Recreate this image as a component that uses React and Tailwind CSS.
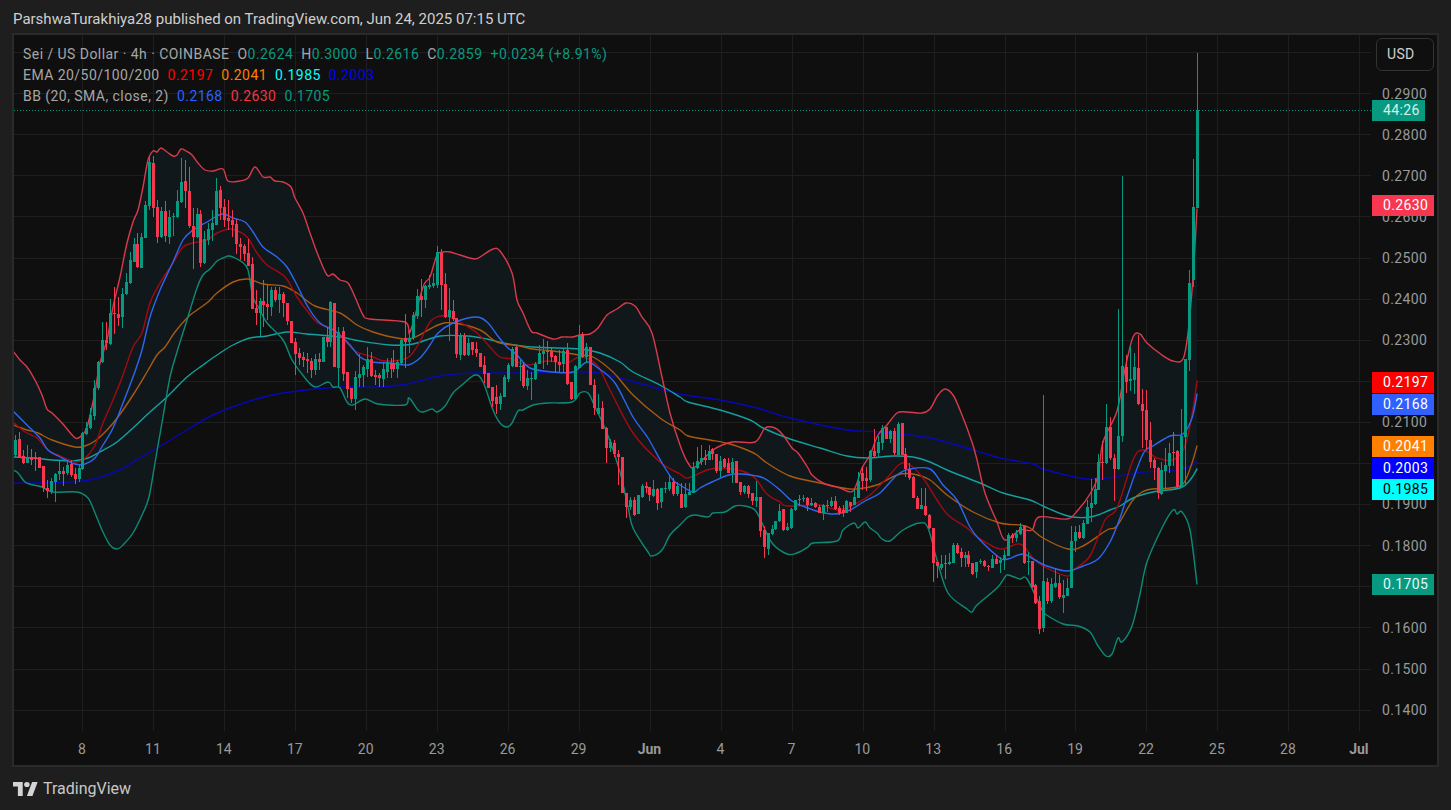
const seg = (ox, oy, sy, rows) => rows.map(([x, g, t, b, wt, wb]) => ({
  x: Math.round(ox + x / 3), g, t: oy + t / sy, b: oy + b / sy, wt: oy + wt / sy, wb: oy + wb / sy,
}));

const candles = [
  ...seg(0, 130, 3, [
    [46,1,930,975,915,980],[58,0,927,985,905,985],[70,0,978,1000,960,1003],[82,1,980,1000,945,1000],[94,0,980,990,958,1005],[106,0,982,987,965,1022],[118,0,982,1015,982,1015],[130,0,1007,1075,1007,1085],[142,0,1073,1083,1050,1103],[154,1,1053,1085,1045,1093],[166,1,1033,1055,1030,1115],[178,1,1023,1032,992,1050],[190,0,1023,1032,1010,1068],[202,1,1005,1030,995,1035],[214,0,1003,1035,990,1040],[226,0,1032,1047,1015,1062],[238,1,1015,1047,1005,1055],[247,1,910,1017,905,1020],[259,1,895,912,875,915],[271,1,855,895,835,898],[283,1,775,857,750,870],[295,1,697,775,693,780],[307,1,630,697,575,700],[319,0,630,640,575,660],[331,1,550,642,507,645],[343,0,548,553,472,612],[355,0,553,563,500,588],[367,1,492,560,475,593],[379,1,457,493,430,495],[391,1,390,458,365,462],[403,1,343,395,325,395],[412,0,342,412,310,415],[424,1,322,413,310,415],[436,1,225,323,212,325],[448,1,95,228,80,240],[460,0,100,235,78,260],[472,0,232,320,210,338],[484,1,243,320,230,325],[496,0,243,318,212,335],[508,1,262,320,240,343],[520,1,257,262,250,318],[532,1,213,262,180,265],[544,1,155,215,85,218],[556,0,153,182,90,235],[568,0,183,288,112,295],[580,0,288,320,235,418],[592,1,252,320,235,325],[601,0,252,398,240,410],[613,1,328,400,302,402],[625,1,297,330,280,345],[637,1,280,300,240,332],[649,1,183,285,145,285],[661,0,181,233,168,270],[673,0,231,270,208,290],[685,0,265,273,210,300],[697,0,270,285,240,320],[709,0,283,343,268,372],[721,0,343,351,325,390],[733,0,348,372,342,392],[745,0,370,407,328,407],[757,0,403,537,380,538],[769,0,535,548,480,585],[781,1,513,550,505,618],[790,0,513,525,450,590],[802,0,522,530,465,570],[814,1,480,530,470,558],[826,0,480,510,470,515],[838,1,492,510,470,548],[850,0,492,520,485,560],[862,0,520,573,518,585],[874,0,573,640,573,640],[886,0,636,671,625,735],[898,0,670,683,655,705],[910,0,682,690,665,710],[922,0,688,694,668,728],[934,0,692,720,685,745],[946,1,688,720,672,735],[958,0,688,695,670,720],[970,1,620,695,620,695],[981,0,620,635,590,650],[991,1,517,635,513,650],[1003,0,518,710,518,710],[1015,1,605,713,590,770],
  ]),
  ...seg(340, 230, 3, [
    [8,0,302,432,292,452],[20,0,427,477,425,505],[32,0,473,507,473,518],[44,1,441,507,422,540],[56,1,432,443,372,470],[68,1,412,435,405,470],[80,1,387,417,350,440],[92,0,387,437,365,440],[104,0,434,441,420,465],[116,0,434,444,430,470],[128,1,417,446,395,472],[140,1,397,427,385,445],[152,0,400,418,385,445],[160,0,400,417,360,425],[172,1,396,417,390,443],[184,1,330,400,325,405],[196,0,325,335,252,415],[208,1,323,335,300,370],[220,1,255,325,245,330],[232,1,197,258,178,268],[244,0,197,210,148,260],[256,1,168,210,165,233],[268,1,165,172,135,178],[280,1,158,168,130,175],[292,1,66,165,48,175],[304,0,68,165,58,240],[316,0,162,260,130,265],[328,1,240,262,175,332],[340,0,242,268,210,272],[349,0,265,372,265,385],[361,1,318,374,308,390],[373,0,318,375,308,378],[385,1,338,375,325,378],[397,0,336,360,335,375],[409,0,358,370,335,380],[421,0,368,410,368,412],[433,0,405,432,378,460],[445,0,430,473,428,475],[457,0,471,512,470,530],[469,0,500,522,465,552],[481,1,498,522,490,540],[493,1,440,500,435,500],[505,1,405,447,400,455],[517,1,357,407,350,410],[529,0,350,410,347,412],[541,1,407,410,390,452],[550,0,405,468,395,475],[562,1,445,468,420,480],[574,1,444,446,425,510],[586,1,403,446,395,450],[598,1,370,402,345,403],[610,1,363,372,327,418],[622,0,362,366,333,405],[634,0,362,382,350,395],[646,0,378,397,375,425],[658,0,395,405,360,425],[670,1,362,403,355,428],[682,0,360,462,340,465],[694,0,456,507,455,510],[706,1,407,507,405,510],[718,1,315,413,285,415],[727,0,312,380,307,383],[739,1,350,380,340,400],[751,0,352,465,352,465],[763,0,465,535,447,555],[775,1,535,552,493,555],[787,0,534,597,514,597],[799,0,595,653,590,698],[811,1,635,655,628,665],[823,0,640,672,630,682],[835,0,672,682,660,765],[847,0,682,790,682,790],[859,0,790,830,790,865],[871,1,810,830,800,840],[883,0,810,855,800,858],[895,1,795,852,795,852],[907,1,768,800,762,805],[919,0,768,773,755,790],[928,0,772,795,772,812],[940,1,778,797,750,800],[952,0,778,818,775,840],[964,1,775,817,775,835],[976,1,775,778,755,790],[988,1,755,777,735,782],[1000,0,755,792,745,798],[1012,1,768,792,755,798],
  ]),
  ...seg(680, 370, 3, [
    [4,0,373,415,340,415],[16,1,373,412,340,415],[28,1,365,375,340,375],[40,1,293,368,275,370],[52,1,273,295,232,298],[64,1,264,276,225,285],[76,0,264,270,240,285],[88,1,243,270,225,270],[97,0,238,253,235,270],[109,0,253,303,253,310],[121,1,272,302,258,320],[133,0,266,292,265,295],[145,0,278,308,265,310],[157,1,276,310,265,340],[169,0,274,338,274,340],[181,0,336,366,336,375],[193,1,348,366,345,372],[205,0,348,373,345,385],[217,0,368,392,368,405],[229,1,381,392,332,410],[241,0,380,483,380,500],[253,0,480,532,468,563],[265,1,490,537,488,555],[277,1,477,492,465,495],[286,1,453,478,453,480],[298,1,423,453,402,455],[310,0,417,480,417,482],[322,1,472,480,460,482],[334,1,418,474,415,478],[346,1,390,420,390,422],[358,0,387,390,375,408],[370,1,385,388,375,395],[382,0,384,405,382,422],[394,1,400,404,385,408],[406,0,400,412,395,415],[418,0,412,428,405,430],[430,1,405,428,402,450],[442,1,404,406,390,425],[454,1,393,408,380,412],[466,0,393,417,378,420],[478,0,414,428,408,435],[490,0,420,428,405,442],[499,1,393,428,390,430],[511,0,396,408,395,425],[523,1,381,405,360,405],[535,1,334,383,307,385],[547,0,309,333,288,360],[559,0,325,333,290,362],[571,1,243,331,240,335],[583,0,243,258,178,265],[595,1,216,250,198,265],[607,1,174,218,165,240],[619,0,172,207,170,208],[631,1,183,207,180,220],[643,0,183,250,175,255],[655,1,162,255,155,255],[667,0,160,255,160,255],[676,0,252,296,235,322],[688,0,296,323,280,330],[700,0,320,384,318,385],[712,0,384,417,378,418],[724,1,405,417,355,418],[736,0,408,436,355,438],[748,0,434,473,432,478],[760,0,473,578,473,635],[772,0,576,587,576,625],[784,1,582,595,555,600],[796,0,580,583,555,628],[808,1,575,583,550,585],[820,1,524,578,520,578],[832,0,524,548,518,552],[844,0,545,565,535,590],[856,1,555,563,545,590],[865,0,555,582,543,590],[877,0,578,612,578,615],[889,1,577,607,575,623],[901,1,573,576,567,582],[913,0,573,588,570,590],[925,0,588,592,585,603],[937,1,567,593,555,595],[949,0,567,581,555,583],[961,1,570,578,562,610],[973,1,555,570,540,600],[985,1,495,557,490,557],[997,0,495,505,490,520],[1009,1,492,505,480,515],
  ]),
  ...seg(1000, 40, 2.49, [
    [61,1,1212,1230,1203,1232],[73,0,1210,1302,1210,1305],[85,1,1298,1300,1275,1332],[97,0,1297,1362,1297,1365],[106,0,1358,1402,1355,1405],[118,0,1398,1467,1385,1480],[130,1,1346,1465,885,1475],[142,0,1349,1398,1340,1405],[154,1,1355,1398,1340,1403],[166,1,1352,1362,1315,1365],[178,0,1351,1386,1332,1392],[190,1,1382,1390,1345,1427],[202,1,1364,1384,1340,1385],[214,1,1247,1365,1210,1365],[226,1,1225,1248,1210,1275],[238,0,1225,1240,1208,1242],[250,1,1202,1240,1195,1242],[262,1,1162,1204,1145,1205],[274,1,1152,1165,1093,1200],[286,1,1118,1155,1090,1157],[295,1,1050,1120,1030,1120],[307,0,1050,1053,998,1095],[319,1,963,1053,907,1055],[331,0,963,1042,938,1045],[343,0,1040,1068,1030,1147],[355,1,986,1068,670,1070],[367,1,811,986,338,1002],[379,0,813,851,785,878],[391,1,845,848,760,875],[403,1,813,846,780,882],[415,0,816,907,735,908],[427,0,906,923,868,1015],[439,0,921,997,872,1022],[451,0,996,1050,950,1065],[463,0,1047,1066,1040,1095],[475,0,1065,1128,1062,1142],[484,1,1070,1130,1050,1132],[496,1,1058,1072,1015,1120],[508,1,1028,1060,1003,1078],[520,0,1026,1028,975,1060],[532,0,1023,1112,1020,1115],[544,1,986,1112,918,1115],[556,1,795,988,795,1110],[568,1,604,797,572,825],[580,1,416,598,296,616],[592,1,174,418,32,418],
  ]),
];

const upper = "13,351 20,360 27,367 35,380 42,395 47,409 52,413 62,423 74,437 78,438 82,435 87,427 94,397 100,363 107,340 113,307 120,277 127,243 133,222 138,210 143,187 148,160 153,151 157,152 161,148 167,152 173,156 177,155 181,149 186,151 192,155 198,163 205,170 213,171 223,169 228,181 240,181 248,178 255,167 263,177 270,177 275,181 283,182 291,187 295,198 303,213 310,233 318,255 327,275 333,274 340,280 348,283 355,297 363,315 370,319 405,322 410,332 423,287 430,277 437,255 443,252 450,252 460,255 475,259 483,255 493,249 500,251 512,273 517,300 523,313 531,331 537,333 553,339 562,337 572,337 580,335 590,334 598,328 607,315 617,309 626,303 635,306 642,317 652,333 662,377 670,413 680,445 688,463 695,467 713,450 732,442 755,442 765,428 775,428 783,435 792,448 798,453 808,468 812,475 823,483 840,488 853,491 862,468 870,455 878,435 887,425 897,413 907,412 922,413 930,409 938,395 945,389 953,395 960,410 972,442 977,460 985,493 997,522 1005,540 1020,530 1032,530 1039,517 1067,519 1078,510 1090,494 1098,476 1103,442 1117,411 1125,369 1133,337 1140,334 1147,343 1162,355 1173,361 1183,359 1188,333 1193,277 1197,209";
const lower = "13,470 18,473 25,482 33,485 42,487 53,492 77,492 88,498 95,513 102,530 110,545 117,549 123,545 133,533 143,513 149,497 155,463 163,417 170,377 177,352 187,320 197,288 203,275 210,269 217,261 223,258 228,256 233,257 242,262 248,270 253,297 260,310 267,323 283,340 292,360 305,378 315,387 328,382 333,387 340,388 347,402 353,405 365,399 378,404 405,405 409,398 418,410 423,412 432,409 437,412 445,406 453,393 462,385 475,375 483,382 493,410 500,423 507,427 512,423 518,411 523,410 533,405 547,403 572,402 580,393 588,393 595,407 607,433 620,472 628,507 633,528 648,552 652,556 662,550 670,535 680,525 688,517 695,515 708,517 713,513 725,512 735,506 745,506 755,510 762,523 772,543 787,554 797,553 808,547 813,543 837,541 843,530 854,523 858,528 865,522 870,528 877,533 882,539 890,541 903,530 920,523 928,528 937,560 948,593 967,609 972,612 977,605 997,588 1005,577 1008,575 1020,579 1027,579 1042,610 1045,614 1063,624 1078,626 1090,632 1098,646 1106,656 1112,654 1118,638 1122,642 1132,626 1140,594 1147,562 1162,528 1173,510 1177,514 1182,512 1190,530 1197,584";
const basis = "13,411 27,425 40,438 48,450 60,457 75,464 85,464 95,458 103,445 113,428 123,403 133,377 142,350 150,317 160,290 173,262 183,240 193,230 207,222 222,214 233,218 245,222 253,232 263,247 277,257 287,267 297,285 308,307 320,323 333,330 340,335 350,345 360,357 372,362 390,363 408,365 420,358 430,345 438,333 453,323 475,317 487,322 497,335 507,347 517,355 530,368 553,372 573,372 587,362 598,368 615,383 633,417 648,438 662,463 673,480 680,485 693,492 700,488 712,482 733,474 757,476 767,480 780,490 792,501 805,507 820,512 835,514 850,510 865,501 880,493 897,475 910,469 930,469 943,485 957,500 970,527 980,540 1000,558 1008,559 1023,554 1035,560 1047,566 1067,571 1083,566 1098,559 1110,542 1120,518 1128,494 1143,454 1153,446 1170,436 1183,434 1192,418 1197,394";
const ema20 = "13,422 25,432 37,438 48,450 58,455 75,462 85,458 95,445 103,423 113,400 123,375 133,347 142,333 150,303 160,283 173,263 183,247 193,243 207,240 217,233 230,229 240,232 248,238 257,253 267,265 285,277 297,297 308,312 318,323 333,329 340,335 347,343 357,352 373,357 385,361 407,358 418,345 430,322 440,316 450,317 460,322 477,333 490,347 500,357 512,359 527,365 547,361 567,363 580,357 597,365 610,390 633,433 660,462 680,474 688,478 707,470 720,468 742,471 755,478 767,494 780,502 787,506 820,505 837,510 853,505 870,495 887,478 900,464 910,465 923,478 937,500 948,515 967,528 977,537 1000,549 1020,544 1033,558 1043,566 1067,576 1073,570 1090,556 1105,520 1117,508 1133,460 1143,450 1157,458 1173,460 1185,446 1193,409 1197,381";
const ema50 = "13,425 27,430 38,433 52,440 75,447 85,446 95,441 107,430 118,417 133,395 147,372 157,355 165,347 175,332 188,317 197,310 208,302 217,293 233,282 248,279 263,284 283,286 297,293 315,306 340,313 357,325 373,332 397,338 413,338 438,325 453,323 480,330 497,342 520,346 533,349 553,351 580,355 593,357 613,372 633,395 660,418 680,430 688,436 710,440 730,444 747,450 757,455 767,463 790,476 820,483 843,488 857,489 877,485 897,475 913,474 930,480 947,495 973,512 1000,523 1020,525 1030,528 1043,538 1068,549 1083,546 1107,530 1117,526 1133,500 1147,490 1170,488 1183,484 1191,466 1197,446";
const ema100 = "13,457 33,458 53,460 73,461 88,458 100,452 117,442 133,428 150,412 167,397 187,377 203,365 217,355 233,345 250,338 267,336 287,332 307,334 340,337 360,341 390,345 413,344 440,336 467,336 487,339 503,343 533,347 580,349 600,353 620,362 633,372 660,385 680,397 688,402 720,410 750,420 763,428 790,439 820,448 847,456 867,458 893,456 913,457 930,462 947,470 980,483 1003,493 1030,500 1043,506 1068,516 1090,517 1110,510 1120,506 1133,498 1153,492 1180,488 1190,480 1197,469";
const ema200 = "13,483 27,483 67,482 90,480 117,471 140,458 167,442 187,430 213,415 247,402 283,393 340,387 377,387 407,384 440,376 473,373 523,373 590,372 627,380 680,394 720,400 757,408 790,418 847,430 880,432 930,438 973,450 1000,458 1033,464 1043,469 1080,478 1100,479 1120,476 1143,472 1180,470 1197,462";

// Catmull-Rom through the traced points, so the lines curve as the originals do.
const parse = (s) => s.split(" ").map((p) => p.split(",").map(Number));
const curve = (pts) => {
  let d = "";
  for (let i = 0; i < pts.length - 1; i++) {
    const a = pts[Math.max(i - 1, 0)], b = pts[i], c = pts[i + 1], e = pts[Math.min(i + 2, pts.length - 1)];
    d += `C${(b[0] + (c[0] - a[0]) / 6).toFixed(1)} ${(b[1] + (c[1] - a[1]) / 6).toFixed(1)} ${(c[0] - (e[0] - b[0]) / 6).toFixed(1)} ${(c[1] - (e[1] - b[1]) / 6).toFixed(1)} ${c[0]} ${c[1]}`;
  }
  return d;
};
const line = (s) => { const p = parse(s); return `M${p[0][0]} ${p[0][1]}` + curve(p); };
const band = () => {
  const u = parse(upper), l = parse(lower).reverse();
  return `M${u[0][0]} ${u[0][1]}` + curve(u) + `L${l[0][0]} ${l[0][1]}` + curve(l) + "Z";
};

const gridY = Array.from({ length: 17 }, (_, i) => 52 + i * 41.1);
const gridX = [82, 153, 224, 295, 366, 437, 508, 579, 650, 721, 792, 863, 934, 1005, 1075, 1146, 1217, 1288, 1359];
const dates = ["8", "11", "14", "17", "20", "23", "26", "29", "Jun", "4", "7", "10", "13", "16", "19", "22", "25", "28", "Jul"];
const ticks = ["0.2900", "0.2800", "0.2700", "0.2600", "0.2500", "0.2400", "0.2300", "", "0.2100", "", "0.1900", "0.1800", "", "0.1600", "0.1500", "0.1400"];
const pills = [
  { v: "44:26", top: 65, w: "w-[53px]", c: "bg-[#089981] text-[#d6f0ea]" },
  { v: "0.2630", top: 160, w: "w-[62px]", c: "bg-[#f7374f] text-white" },
  { v: "0.2197", top: 337, w: "w-[62px]", c: "bg-[#ff0000] text-white" },
  { v: "0.2168", top: 359, w: "w-[62px]", c: "bg-[#3060ff] text-white" },
  { v: "0.2041", top: 401, w: "w-[62px]", c: "bg-[#ff7f00] text-white" },
  { v: "0.2003", top: 423, w: "w-[62px]", c: "bg-[#0000ff] text-white" },
  { v: "0.1985", top: 444, w: "w-[62px]", c: "bg-[#00ffff] text-black" },
  { v: "0.1705", top: 539, w: "w-[62px]", c: "bg-[#089981] text-[#e6f7f3]" },
];

function Chart() {
  return (
    <svg viewBox="14 35 1357 696" className="block h-[696px] w-[1357px]">
      <g stroke="#1f1f1f" strokeWidth="1" shapeRendering="crispEdges">
        {gridY.map((y) => <line key={y} x1="14" x2="1371" y1={Math.round(y) + 0.5} y2={Math.round(y) + 0.5} />)}
        {gridX.map((x) => <line key={x} x1={x + 0.5} x2={x + 0.5} y1="35" y2="731" />)}
      </g>
      <path d={band()} fill="#11181c" />
      <g fill="none" strokeWidth="1.4" strokeLinejoin="round" strokeLinecap="round">
        <path d={line(ema200)} stroke="#0808b4" />
        <path d={line(ema100)} stroke="#12a0a0" />
        <path d={line(ema50)} stroke="#a85a10" />
        <path d={line(ema20)} stroke="#a20a10" />
        <path d={line(upper)} stroke="#d93a4c" />
        <path d={line(lower)} stroke="#0e8a75" />
        <path d={line(basis)} stroke="#2f66f0" />
      </g>
      <g shapeRendering="crispEdges">
        {candles.map((c, i) => (
          <g key={i} fill={c.g ? "#089981" : "#f7374f"}>
            <rect x={c.x} y={c.wt} width="1" height={Math.max(c.wb - c.wt, 1)} />
            <rect x={c.x - 1} y={c.t} width="3" height={Math.max(c.b - c.t, 1)} />
          </g>
        ))}
      </g>
      <line x1="14" x2="1371" y1="110.5" y2="110.5" stroke="#089981" strokeWidth="1" strokeDasharray="1 2" />
    </svg>
  );
}

function Logo() {
  return (
    <svg viewBox="0 3 36 22" className="h-[14px] w-[25px] fill-[#d4d4d4]" preserveAspectRatio="none">
      <path d="M14 25H7V10H0V3h14v22zM28 25h-8l7.5-22h8L28 25z" />
      <circle cx="20" cy="7" r="4" />
    </svg>
  );
}

export default function App() {
  return (
    <div className="flex h-[810px] w-[1451px] flex-col bg-[#1e1e1e] pl-3 font-['Roboto',sans-serif] text-[#c8c8c8]">
      <div className="flex h-[33px] items-center pt-[5px] text-[15px] text-[#cfcfcf]">
        <span className="ml-px">ParshwaTurakhiya28 published on TradingView.com, Jun 24, 2025 07:15 UTC</span>
      </div>
      <div className="flex w-[1427px] flex-col border-2 border-[#2a2a2a] bg-[#0f0f0f]">
        <div className="flex h-[696px]">
          <div className="relative h-[696px] w-[1357px] shrink-0">
            <Chart />
            <div className="absolute left-[9px] top-[9px] flex flex-col text-[14px] leading-[21px] tracking-[0.45px] text-[#a6a6a6]">
              <div className="flex">
                <span>Sei / US Dollar · 4h · COINBASE</span>
                <span className="ml-2">O<span className="text-[#089981]">0.2624</span></span>
                <span className="ml-2">H<span className="text-[#089981]">0.3000</span></span>
                <span className="ml-2">L<span className="text-[#089981]">0.2616</span></span>
                <span className="ml-2">C<span className="text-[#089981]">0.2859</span></span>
                <span className="ml-2 text-[#089981]">+0.0234 (+8.91%)</span>
              </div>
              <div className="flex">
                <span>EMA 20/50/100/200</span>
                <span className="ml-2 text-[#ff0000]">0.2197</span>
                <span className="ml-2 text-[#ff7f00]">0.2041</span>
                <span className="ml-2 text-[#00ffff]">0.1985</span>
                <span className="ml-2 text-[#0000ff]">0.2003</span>
              </div>
              <div className="flex">
                <span>BB (20, SMA, close, 2)</span>
                <span className="ml-2 text-[#2962ff]">0.2168</span>
                <span className="ml-2 text-[#f23645]">0.2630</span>
                <span className="ml-2 text-[#089981]">0.1705</span>
              </div>
            </div>
          </div>
          <div className="relative flex-1 pl-[11px] text-[14px] tracking-[0.35px] text-[#9a9a9a]">
            <div className="absolute left-[5px] top-[3px] flex h-[33px] w-[58px] items-center rounded-md border border-[#333333] pl-[10px] text-[#cfcfcf]">USD</div>
            <div className="flex flex-col pt-[38.5px]">
              {ticks.map((t, i) => (
                <div key={i} className="flex h-[41.1px] items-center">{t}</div>
              ))}
            </div>
            {pills.map((p) => (
              <div key={p.v} style={{ top: p.top }} className={`absolute left-px flex h-[21px] items-center pl-[11px] ${p.w} ${p.c}`}>{p.v}</div>
            ))}
          </div>
        </div>
        <div className="flex h-[34px] items-center pl-[32.5px] pt-[2px] text-[14px] text-[#9a9a9a]">
          {dates.map((d) => (
            <div key={d} className={`w-[70.94px] shrink-0 text-center ${d === "Jun" || d === "Jul" ? "font-bold" : ""}`}>{d}</div>
          ))}
        </div>
      </div>
      <div className="flex flex-1 items-center gap-[5px] pt-[1px] pl-px">
        <Logo />
        <span className="text-[16px] text-[#c8c8c8]">TradingView</span>
      </div>
    </div>
  );
}
